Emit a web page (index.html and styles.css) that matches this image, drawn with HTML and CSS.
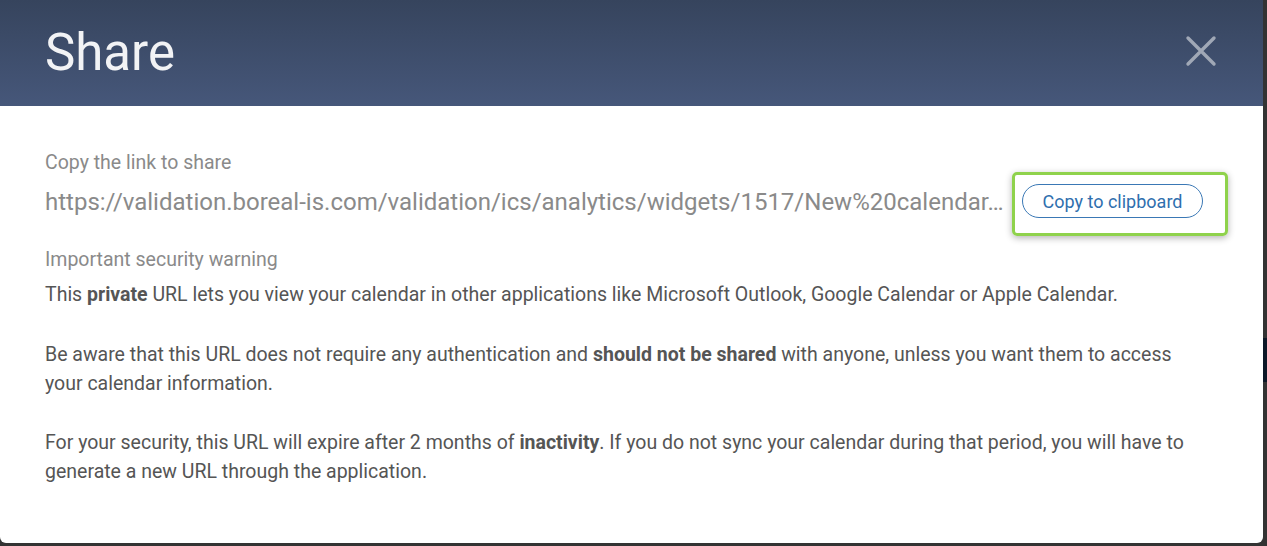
FILE: index.html
```html
<!DOCTYPE html>
<html lang="en">
<head>
<meta charset="utf-8">
<title>Share</title>
<link rel="stylesheet" href="styles.css">
</head>
<body>
<div class="page">
  <div class="modal">
    <header class="modal-header">
      <h1 class="modal-title">Share</h1>
      <button class="close-btn" aria-label="Close">
        <svg width="32" height="32" viewBox="0 0 32 32" aria-hidden="true">
          <path d="M3 3 L29 29 M29 3 L3 29" stroke="#a0a8b6" stroke-width="3.4" stroke-linecap="round" fill="none"/>
        </svg>
      </button>
    </header>
    <div class="modal-body">
      <div class="label">Copy the link to share</div>
      <div class="link-row">
        <div class="url">https://validation.boreal-is.com/validation/ics/analytics/widgets/1517/New%20calendar…</div>
        <div class="copy-wrap">
          <button class="copy-btn">Copy to clipboard</button>
        </div>
      </div>
      <div class="label warn-title">Important security warning</div>
      <p class="text">This <b>private</b> URL lets you view your calendar in other applications like Microsoft Outlook, Google Calendar or Apple Calendar.</p>
      <p class="text">Be aware that this URL does not require any authentication and <b>should not be shared</b> with anyone, unless you want them to access your calendar information.</p>
      <p class="text">For your security, this URL will expire after 2 months of <b>inactivity</b>. If you do not sync your calendar during that period, you will have to generate a new URL through the application.</p>
    </div>
  </div>
  <div class="side-strip"><div class="side-block"></div></div>
</div>
</body>
</html>
```
FILE: styles.css
```css
html, body {
  margin: 0;
  padding: 0;
  background: #333333;
  font-family: Roboto, "Liberation Sans", Arial, sans-serif;
}
.page {
  display: flex;
  width: 1267px;
  height: 546px;
  overflow: hidden;
}
.modal {
  width: 1263px;
  height: 543px;
  background: #ffffff;
  border-radius: 0 0 6px 6px;
  overflow: hidden;
  flex: none;
}
.side-strip {
  flex: 1;
  padding-top: 338px;
}
.side-block {
  height: 44px;
  background: #0d1828;
}
.modal-header {
  height: 106px;
  background: linear-gradient(to bottom, #36445d 0%, #46577a 100%);
  display: flex;
  align-items: center;
  justify-content: space-between;
  padding: 0 46px 0 45px;
  box-sizing: border-box;
}
.modal-title {
  margin: 0 0 2px;
  font-size: 51px;
  font-weight: 400;
  color: #f2f3f5;
  line-height: 1;
}
.close-btn {
  background: none;
  border: 0;
  padding: 0;
  width: 32px;
  height: 32px;
  margin-bottom: 4px;
  cursor: pointer;
  display: flex;
}
.modal-body {
  padding: 43px 60px 0 45px;
}
.label {
  font-size: 19.5px;
  line-height: 28px;
  color: #8a8a8a;
}
.link-row {
  display: flex;
  align-items: center;
  margin-top: 7px;
  height: 34px;
}
.url {
  flex: 1;
  min-width: 0;
  white-space: nowrap;
  overflow: hidden;
  font-size: 24px;
  color: #8a8a8a;
  line-height: 32px;
  margin-top: 2px;
}
.copy-wrap {
  position: relative;
  margin-left: 17px;
  flex: none;
}
.copy-wrap::before {
  content: "";
  position: absolute;
  top: -12px;
  bottom: -18px;
  left: -10px;
  right: -25px;
  border: 3px solid #8fd24c;
  border-radius: 5px;
  box-shadow: 0 2px 7px rgba(0, 0, 0, 0.3);
  pointer-events: none;
}
.copy-btn {
  position: relative;
  width: 181px;
  height: 34px;
  border: 1px solid #3a78b5;
  border-radius: 17px;
  background: #ffffff;
  color: #2f6fae;
  font-family: Roboto, "Liberation Sans", Arial, sans-serif;
  font-size: 18px;
  padding: 0;
  cursor: pointer;
}
.warn-title {
  margin-top: 28px;
  margin-bottom: 7px;
}
.text {
  margin: 0 0 31px;
  font-size: 19.5px;
  line-height: 28.8px;
  color: #555555;
}
.text b {
  font-weight: 700;
}
```
